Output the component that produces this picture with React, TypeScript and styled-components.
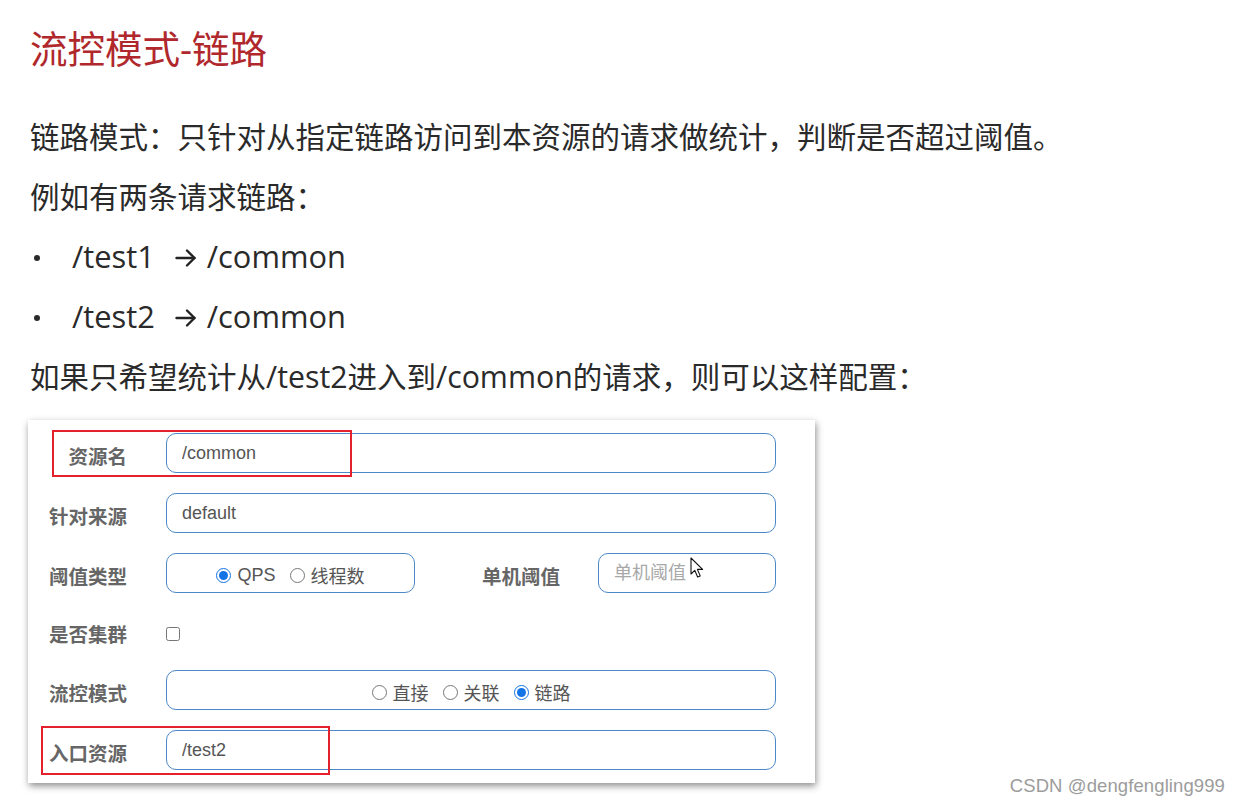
import React from "react";
import styled, { createGlobalStyle } from "styled-components";

const Global = createGlobalStyle`
  html, body { margin: 0; padding: 0; background: #ffffff; }
  body { width: 1240px; height: 805px; overflow: hidden; }
`;

const Page = styled.div`
  position: relative;
  box-sizing: border-box;
  width: 1240px;
  height: 805px;
  padding: 29px 0 0 30px;
  font-family: "Open Sans", "Noto Sans CJK SC", sans-serif;
  color: #2a2a2a;
`;

const Title = styled.h1`
  margin: 0 0 38px 0;
  font-family: "Open Sans", "Noto Sans CJK SC", sans-serif;
  font-size: 37.5px;
  line-height: 40px;
  font-weight: 400;
  color: #b0282c;
`;

const Para = styled.p`
  margin: 0;
  font-size: 29.5px;
  line-height: 60px;
  white-space: nowrap;
`;

const Latin = styled.span`
  font-size: 30.3px;
`;

const BulletRow = styled.div`
  display: flex;
  align-items: center;
  height: 60px;
  font-size: 30.8px;
  white-space: nowrap;
  padding-bottom: 2px;
  box-sizing: border-box;
`;

const Dot = styled.span`
  width: 6px;
  height: 6px;
  border-radius: 50%;
  background: #2a2a2a;
  margin: 4px 32px 0 4px;
`;

const ArrowIcon = styled.svg`
  width: 22px;
  height: 20px;
  margin: 3px 10px 0 20px;
  flex: none;
`;

const Card = styled.div`
  box-sizing: border-box;
  width: 787px;
  margin: 13px 0 0 -2px;
  padding: 13px 39px 13px 20px;
  background: #fff;
  box-shadow: 1px 3px 7px rgba(0, 0, 0, 0.45);
  display: flex;
  flex-direction: column;
  gap: 20px;
`;

const Row = styled.div<{ $h?: number }>`
  position: relative;
  display: grid;
  grid-template-columns: 79px 1fr;
  column-gap: 39px;
  align-items: center;
  height: ${(p) => p.$h ?? 40}px;
`;

const Label = styled.div`
  text-align: right;
  font-family: "Noto Sans CJK SC", sans-serif;
  font-weight: 700;
  font-size: 19.5px;
  color: #666;
  white-space: nowrap;
  padding-top: 4px;
`;

const Field = styled.input`
  box-sizing: border-box;
  width: 100%;
  height: 40px;
  border: 1px solid #4d89c6;
  border-radius: 10px;
  padding: 0 15px;
  font-family: "Liberation Sans", "Noto Sans CJK SC", sans-serif;
  font-size: 18px;
  color: #555;
  background: #fff;
  outline: none;
  &::placeholder {
    color: #a8a8a8;
  }
`;

const RadioBox = styled.div<{ $w?: number }>`
  box-sizing: border-box;
  width: ${(p) => (p.$w ? `${p.$w}px` : "100%")};
  height: 40px;
  border: 1px solid #4d89c6;
  border-radius: 10px;
  display: flex;
  align-items: center;
  justify-content: center;
  gap: 14px;
  padding-top: 4px;
`;

const RadioItem = styled.label`
  display: flex;
  align-items: center;
  gap: 6px;
  font-family: "Liberation Sans", "Noto Sans CJK SC", sans-serif;
  font-size: 18px;
  color: #555;
  white-space: nowrap;
`;

const Radio = styled.input`
  width: 15px;
  height: 15px;
  margin: 0;
  accent-color: #1473e6;
`;

const Check = styled.input`
  width: 14px;
  height: 14px;
  margin: 4px 0 0 0;
`;

const Inline = styled.div`
  display: flex;
  align-items: center;
`;

const SubLabel = styled(Label)`
  margin: 0 38px 0 67px;
  text-align: left;
`;

const FieldWrap = styled.div`
  position: relative;
  flex: 1;
`;

const Pointer = styled.svg`
  position: absolute;
  left: 92px;
  top: 4px;
  width: 14px;
  height: 22px;
  pointer-events: none;
`;

const RedBox = styled.div<{ $l: number; $t: number; $w: number; $h: number }>`
  position: absolute;
  left: ${(p) => p.$l}px;
  top: ${(p) => p.$t}px;
  width: ${(p) => p.$w}px;
  height: ${(p) => p.$h}px;
  box-sizing: border-box;
  border: 2.5px solid #e3202b;
  pointer-events: none;
`;

const Watermark = styled.div`
  position: absolute;
  right: 15px;
  bottom: 8px;
  font-family: "Liberation Sans", sans-serif;
  font-size: 18.5px;
  color: #9c9c9c;
  letter-spacing: 0.1px;
`;

const Arrow = () => (
  <ArrowIcon viewBox="0 0 22 20" fill="none" stroke="#222" strokeWidth="2.4" strokeLinecap="round" strokeLinejoin="round">
    <path d="M1.5 10 H19.5" />
    <path d="M12 2.5 L19.5 10 L12 17.5" />
  </ArrowIcon>
);

export default function App() {
  return (
    <>
      <Global />
      <Page>
        <Title>流控模式-链路</Title>
        <Para>链路模式：只针对从指定链路访问到本资源的请求做统计，判断是否超过阈值。</Para>
        <Para>例如有两条请求链路：</Para>
        <BulletRow>
          <Dot />
          /test1
          <Arrow />
          /common
        </BulletRow>
        <BulletRow>
          <Dot />
          /test2
          <Arrow />
          /common
        </BulletRow>
        <Para>
          如果只希望统计从<Latin>/test2</Latin>进入到<Latin>/common</Latin>的请求，则可以这样配置：
        </Para>

        <Card>
          <Row>
            <Label>资源名</Label>
            <Field readOnly defaultValue="/common" />
            <RedBox $l={4} $t={-3} $w={300} $h={47} />
          </Row>
          <Row>
            <Label>针对来源</Label>
            <Field readOnly defaultValue="default" />
          </Row>
          <Row>
            <Label>阈值类型</Label>
            <Inline>
              <RadioBox $w={249}>
                <RadioItem>
                  <Radio type="radio" name="grade" defaultChecked />
                  QPS
                </RadioItem>
                <RadioItem>
                  <Radio type="radio" name="grade" />
                  线程数
                </RadioItem>
              </RadioBox>
              <SubLabel>单机阈值</SubLabel>
              <FieldWrap>
                <Field readOnly placeholder="单机阈值" />
                <Pointer viewBox="0 0 14 22">
                  <path
                    d="M1 1 L1 17 L4.8 13.4 L7.6 20 L10.2 18.9 L7.4 12.4 L12.6 12.4 Z"
                    fill="#fff"
                    stroke="#111"
                    strokeWidth="1.1"
                    strokeLinejoin="round"
                  />
                </Pointer>
              </FieldWrap>
            </Inline>
          </Row>
          <Row $h={37}>
            <Label>是否集群</Label>
            <Inline>
              <Check type="checkbox" />
            </Inline>
          </Row>
          <Row>
            <Label>流控模式</Label>
            <RadioBox>
              <RadioItem>
                <Radio type="radio" name="strategy" />
                直接
              </RadioItem>
              <RadioItem>
                <Radio type="radio" name="strategy" />
                关联
              </RadioItem>
              <RadioItem>
                <Radio type="radio" name="strategy" defaultChecked />
                链路
              </RadioItem>
            </RadioBox>
          </Row>
          <Row>
            <Label>入口资源</Label>
            <Field readOnly defaultValue="/test2" />
            <RedBox $l={-7} $t={-4} $w={289} $h={49} />
          </Row>
        </Card>
        <Watermark>CSDN @dengfengling999</Watermark>
      </Page>
    </>
  );
}
